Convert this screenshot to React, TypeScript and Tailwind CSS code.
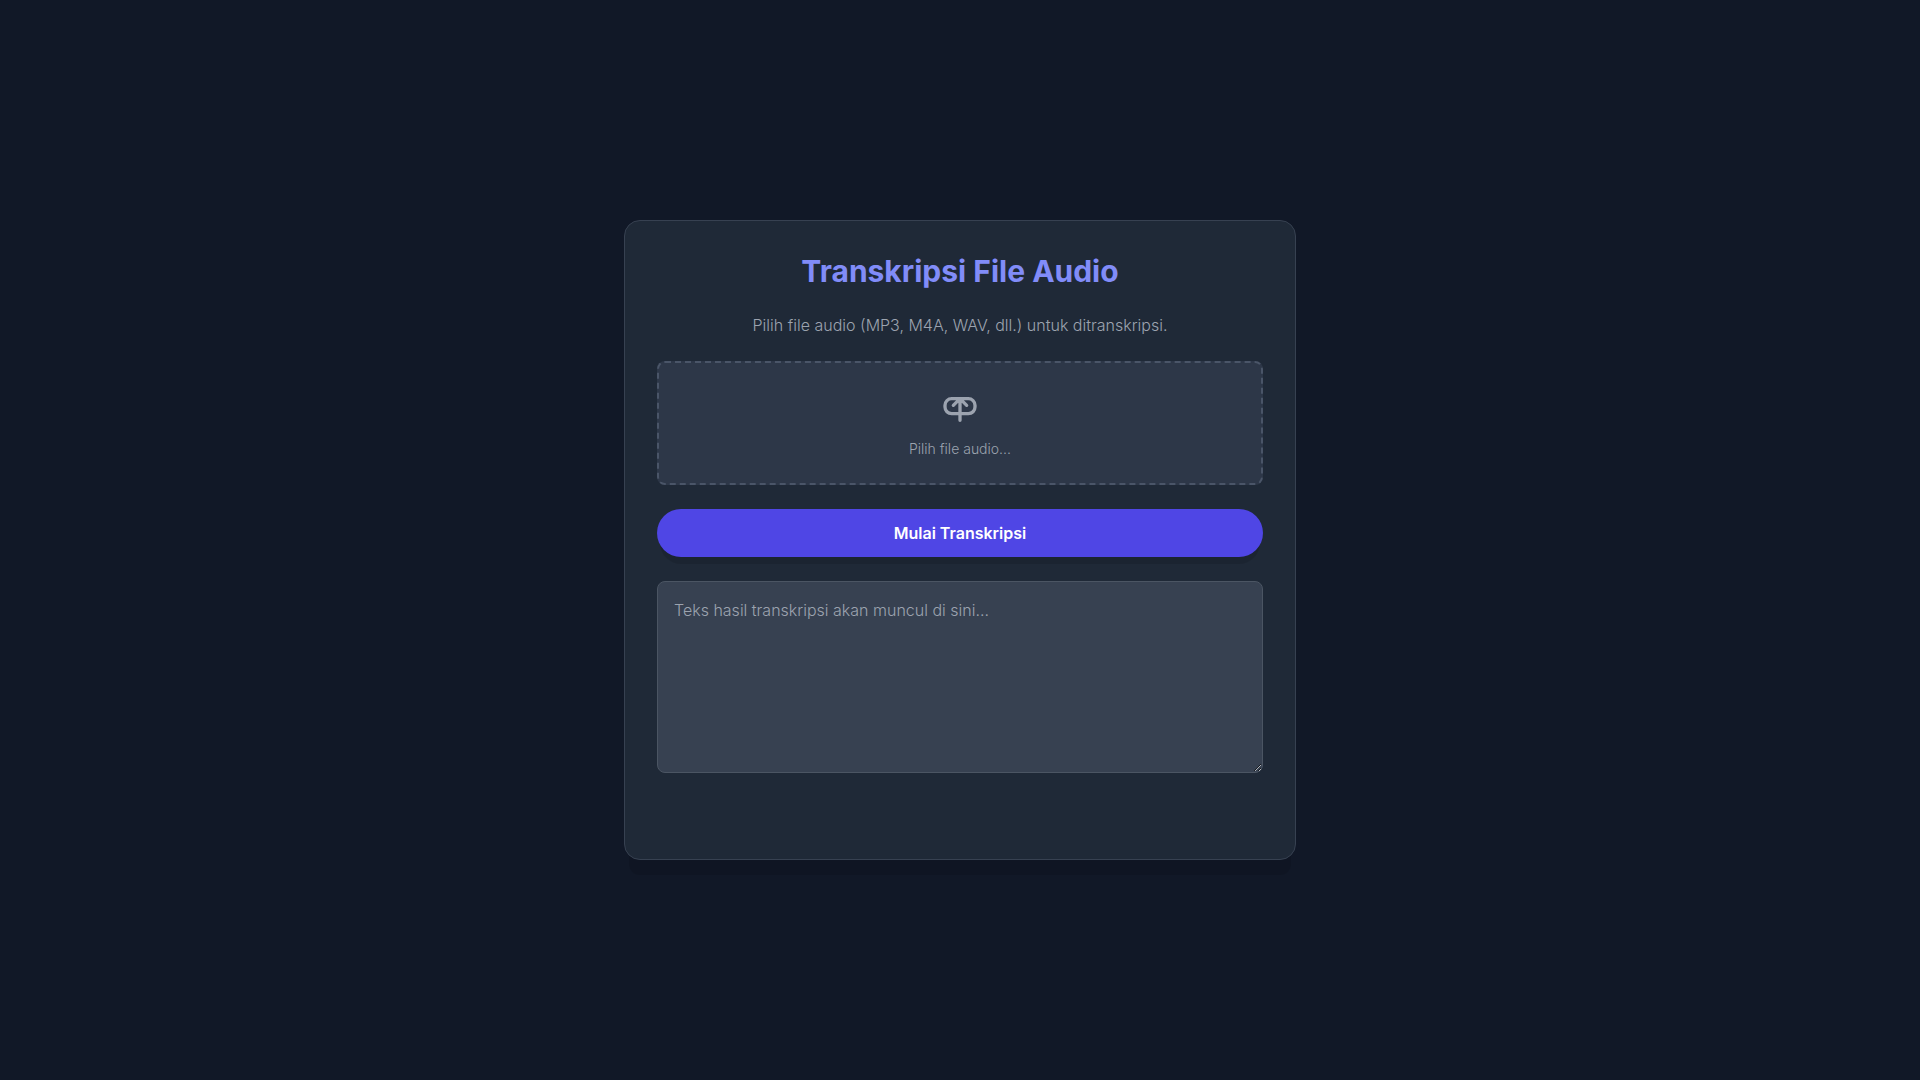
import { useState } from 'react';
import type { ChangeEvent } from 'react';

export default function App() {
  const [fileName, setFileName] = useState('');
  const [transcript, setTranscript] = useState('');
  const [status, setStatus] = useState('');

  const handleFile = (e: ChangeEvent<HTMLInputElement>) => {
    setFileName(e.target.files?.[0]?.name ?? '');
    setStatus('');
  };

  const handleStart = () => {
    if (!fileName) setStatus('Pilih file audio terlebih dahulu.');
  };

  return (
    <div className="flex min-h-screen items-center justify-center bg-[#111827] p-4 font-['Inter',sans-serif] font-light">
      <main className="w-full max-w-2xl rounded-2xl border border-[#374151] bg-[#1f2937] p-8 shadow-[0_20px_0_-5px_rgba(0,0,0,0.1)]">
        <h1 className="mb-6 text-center text-3xl font-bold text-[#818cf8]">Transkripsi File Audio</h1>
        <p className="mb-6 text-center text-[#9ca3af]">
          Pilih file audio (MP3, M4A, WAV, dll.) untuk ditranskripsi.
        </p>

        <label
          htmlFor="audio-file"
          className="mb-6 flex cursor-pointer flex-col items-center rounded-lg border-2 border-dashed border-[#4a5568] bg-[#2d3748] p-6 hover:bg-[#374151]"
        >
          <svg className="mb-3 h-10 w-10 text-[#9ca3af]" fill="none" stroke="currentColor" viewBox="0 0 24 24">
            <path
              strokeLinecap="round"
              strokeLinejoin="round"
              strokeWidth={2}
              d="M7 16a4 4 0 01-4-4v-1a4 4 0 014-4h10a4 4 0 014 4v1a4 4 0 01-4 4H7zM8 11l4-4m0 0l4 4m-4-4v13"
            />
          </svg>
          <span className="text-sm text-[#9ca3af]">{fileName || 'Pilih file audio...'}</span>
          <input id="audio-file" type="file" accept="audio/*" className="hidden" onChange={handleFile} />
        </label>

        <button
          type="button"
          onClick={handleStart}
          className="mb-6 w-full rounded-full bg-[#4f46e5] px-6 py-3 font-semibold text-white shadow-[0_10px_0_-3px_rgba(0,0,0,0.1)] hover:bg-[#4338ca]"
        >
          Mulai Transkripsi
        </button>

        <div>
          <textarea
            aria-label="Hasil transkripsi"
            value={transcript}
            onChange={(e) => setTranscript(e.target.value)}
            placeholder="Teks hasil transkripsi akan muncul di sini..."
            className="h-48 w-full rounded-lg border border-[#4b5563] bg-[#374151] p-4 text-[#e5e7eb] placeholder:text-[#9ca3af]"
          />
        </div>

        <p className="mt-6 min-h-6 text-center text-[#9ca3af]">{status}</p>
      </main>
    </div>
  );
}
